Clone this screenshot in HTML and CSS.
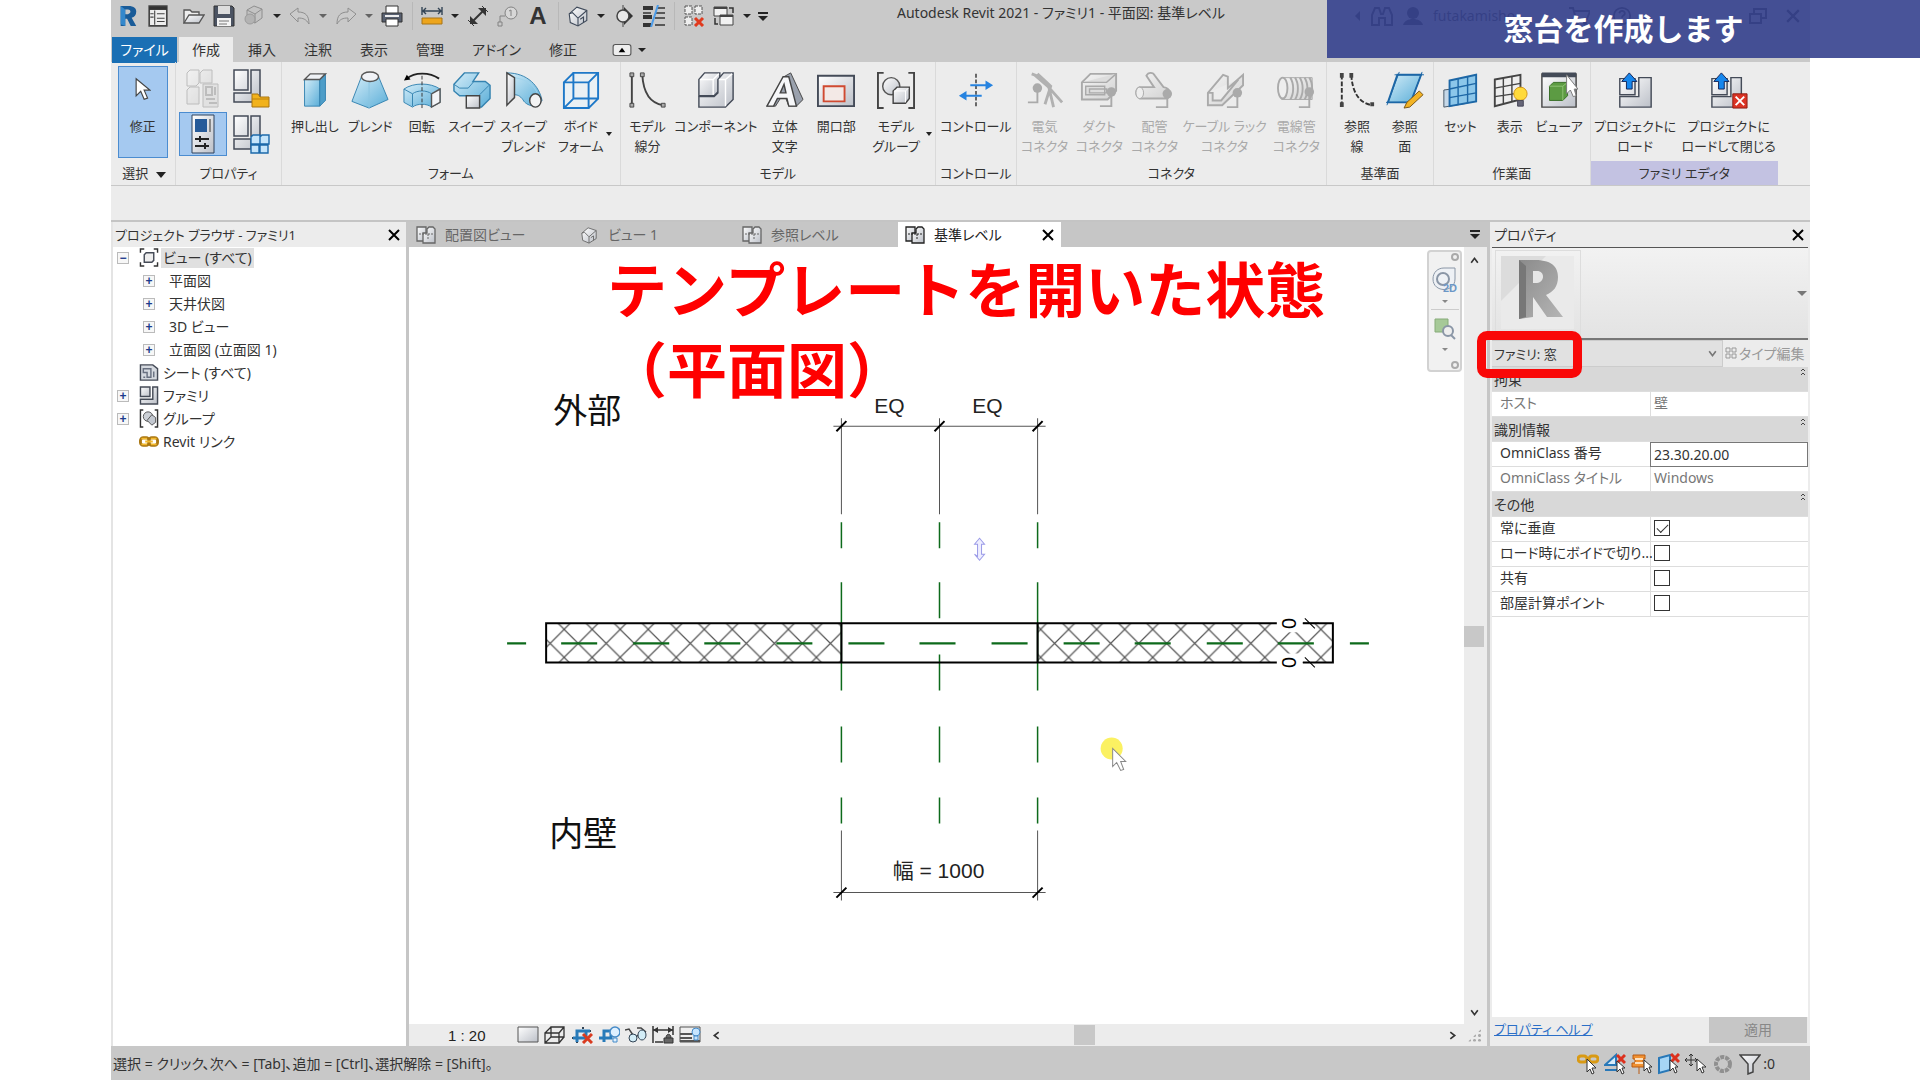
FILE: index.html
```html
<!DOCTYPE html>
<html lang="ja">
<head>
    <meta charset="UTF-8">
    <meta name="viewport" content="width=device-width, initial-scale=1.0">
    <title>Autodesk Revit 2021 - ファミリ1</title>
    <link rel="stylesheet" href="styles.css">
</head>
<body>
    <svg class="defs" aria-hidden="true">
        <defs>
            <linearGradient id="blue" x1="0" y1="0" x2="1" y2="1"><stop offset="0" stop-color="#d3ecf8"/><stop offset="1" stop-color="#5aaed8"/></linearGradient>
            <linearGradient id="gray" x1="0" y1="0" x2="1" y2="1"><stop offset="0" stop-color="#fff"/><stop offset="1" stop-color="#bcc0c8"/></linearGradient>
            <linearGradient id="pale" x1="0" y1="0" x2="1" y2="1"><stop offset="0" stop-color="#f4f4f4"/><stop offset="1" stop-color="#d2d2d2"/></linearGradient>
            <linearGradient id="rlogo" x1="0" y1="0" x2="1" y2="1"><stop offset="0" stop-color="#8b8b8b"/><stop offset="1" stop-color="#b5b5b5"/></linearGradient>
            <pattern id="hatch" x="564" y="629" width="28" height="28" patternUnits="userSpaceOnUse">
                <path d="M0 0L28 28M28 0L0 28" stroke="#555" stroke-width="1.2" fill="none"/>
            </pattern>
            <symbol id="view" viewBox="0 0 20 18"><path d="M1 1h9v14H1z" fill="url(#gray)" stroke="currentColor" stroke-width="1.3"/><path d="M7 7h4V3l2-2h4l2 2v14H7z" fill="url(#gray)" stroke="currentColor" stroke-width="1.3"/><path d="M3 8h14M12 8v6" stroke="currentColor" stroke-dasharray="2 1" fill="none"/></symbol>
            <symbol id="house" viewBox="0 0 20 20"><path d="M2 8l7-6 9 3v9l-8 5-7-3z" fill="url(#gray)" stroke="currentColor"/><path d="M2 8l3-1 5 5v7M18 5l-8 7M12 13l3-2v5" fill="none" stroke="currentColor"/></symbol>
            <symbol id="pointer" viewBox="0 0 14 20"><path d="M1 1v15l4-4 3 7 3-1-3-7h5z" fill="#fff" stroke="#444"/></symbol>
            <symbol id="close" viewBox="0 0 12 12"><path d="M1 1l10 10M11 1L1 11" stroke="currentColor" stroke-width="2" fill="none"/></symbol>
            <symbol id="family" viewBox="0 0 20 20"><path d="M1 1h10v10H1z" fill="url(#gray)" stroke="#454b57" stroke-width="1.5"/><path d="M14 1h5v18H1v-5h13z" fill="url(#gray)" stroke="#454b57" stroke-width="1.5"/></symbol>
        </defs>
    </svg>

    <div class="app">
        <header class="titlebar">
            <div class="quick">
                <button class="qbtn" aria-label="Revit"><svg viewBox="0 0 20 24"><path d="M2 1h8c7 0 9 3 9 6 0 4-2 6-5 7l5 9h-6l-4-8H7v8H2z" fill="#195b98"/><path d="M7 5h3c3 0 4 4 0 5H7z" fill="#c9c9c9"/><path d="M2 1l5 4v18l-5-2z" fill="#3488cc"/></svg></button>
                <button class="qbtn" aria-label="ホーム"><svg viewBox="0 0 20 20"><path d="M2 1h16v18H2z" fill="#eee" stroke="#444" stroke-width="1.5"/><path d="M2 3h16" stroke="#333" stroke-width="3"/><path d="M7 5v13M9 8h7M9 12h7M9 15h7M3 8h3M3 11h3" stroke="#444"/></svg></button>
                <span class="qgap"></span>
                <button class="qbtn" aria-label="開く"><svg viewBox="0 0 22 20"><path d="M1 17V4h6l2 2h7v4" fill="#eee" stroke="#555" stroke-width="1.3"/><path d="M1 17L6 9h15l-5 8z" fill="url(#gray)" stroke="#555" stroke-width="1.3"/></svg></button>
                <button class="qbtn" aria-label="保存"><svg viewBox="0 0 22 22"><path d="M1 1h18l2 2v18H1z" fill="#4b5362" stroke="#333"/><path d="M5 1h12v8H5z" fill="#ddd"/><path d="M4 13h14v8H4z" fill="#f3f3f3"/><path d="M6 16h10M6 19h8" stroke="#777"/></svg></button>
                <button class="qbtn dim" aria-label="同期"><svg viewBox="0 0 22 22"><path d="M4 5l7-4 8 3v9l-7 5-8-3z" fill="#c2c2c2" stroke="#777"/><path d="M4 5l8 4 7-5M12 9v9" stroke="#777" fill="none"/><circle cx="7" cy="14" r="5" fill="#aaa" stroke="#888"/></svg></button>
                <button class="caret" aria-label="同期の一覧"></button>
                <button class="qbtn dim" aria-label="元に戻す"><svg viewBox="0 0 22 20"><path d="M1 8l8-6v4c8 0 11 4 11 12-3-5-6-6-11-6v4z" fill="#ccc" stroke="#777"/></svg></button>
                <button class="caret faint" aria-label="履歴"></button>
                <button class="qbtn dim" aria-label="やり直し"><svg viewBox="0 0 22 20"><path d="M21 8l-8-6v4C5 6 2 10 2 18c3-5 6-6 11-6v4z" fill="#ccc" stroke="#777"/></svg></button>
                <button class="caret faint" aria-label="やり直し履歴"></button>
                <button class="qbtn" aria-label="印刷"><svg viewBox="0 0 22 22"><path d="M5 8V1h12v7" fill="#fff" stroke="#333"/><path d="M1 8h20v9H1z" fill="#586070" stroke="#333"/><path d="M5 14h12v7H5z" fill="#fff" stroke="#333"/><path d="M4 11h14" stroke="#eee" stroke-width="2"/></svg></button>
                <span class="qsep"></span>
                <button class="qbtn" aria-label="計測"><svg viewBox="0 0 22 20"><path d="M2 5h18M5 2L2 5l3 3M17 2l3 3-3 3M1 1v8M21 1v8" stroke="#345" fill="none" stroke-width="1.4"/><path d="M1 12h20v6H1z" fill="#eda51c" stroke="#a87516"/></svg></button>
                <button class="caret" aria-label="計測の一覧"></button>
                <button class="qbtn" aria-label="寸法"><svg viewBox="0 0 22 22"><path d="M5 17L17 5" stroke="#333" stroke-width="2"/><path d="M3 19v-8l8 8zM19 3v8l-8-8z" fill="#333"/><path d="M1 15l6 6M15 1l6 6" stroke="#333" fill="none"/></svg></button>
                <button class="qbtn dim" aria-label="タグ"><svg viewBox="0 0 22 22"><circle cx="14" cy="8" r="6" fill="#ddd" stroke="#666"/><path d="M12 6l2-1v6M3 17v-6h5M1 17h4v4H1z" stroke="#666" fill="none"/></svg></button>
                <button class="qbtn letter" aria-label="文字">A</button>
                <span class="qsep"></span>
                <button class="qbtn slate" aria-label="3D ビュー"><svg><use href="#house"/></svg></button>
                <button class="caret" aria-label="3D ビューの一覧"></button>
                <button class="qbtn" aria-label="断面"><svg viewBox="0 0 22 22"><path d="M11 2l9 9-9 9z" fill="#333"/><circle cx="10" cy="11" r="6" fill="#e8e8e8" stroke="#444" stroke-width="1.5"/><path d="M10 0v5M10 17v5" stroke="#444"/></svg></button>
                <button class="qbtn" aria-label="細線"><svg viewBox="0 0 22 22"><path d="M0 3h10M0 12h9M0 20h8" stroke="#333" stroke-width="4"/><path d="M0 8h8M14 3h8M13 8h9M12 13h10M12 20h10" stroke="#333" stroke-width="1.4"/><path d="M15 0L8 22" stroke="#4b9be8" stroke-width="2"/></svg></button>
                <span class="qsep"></span>
                <button class="qbtn" aria-label="非表示を閉じる"><svg viewBox="0 0 22 22"><path d="M2 1h7v8H2zM12 1h7v8h-7zM2 12h7v8H2z" fill="#eee" stroke="#555" stroke-dasharray="3 1"/><path d="M12 13l8 8M20 13l-8 8" stroke="#e03a1e" stroke-width="3"/></svg></button>
                <button class="qbtn" aria-label="ウィンドウ切替"><svg viewBox="0 0 22 22"><path d="M1 2h13v9H1zM7 10h13v10H7z" fill="#f2f2f2" stroke="#444"/><path d="M1 3h13M7 11h13" stroke="#444" stroke-width="2"/><path d="M16 3h4v5M5 19H2v-6" fill="none" stroke="#333" stroke-width="1.5"/></svg></button>
                <button class="caret" aria-label="ウィンドウの一覧"></button>
                <button class="caret bar" aria-label="カスタマイズ"></button>
            </div>
            <h1 class="title">Autodesk Revit 2021 - ファミリ1 - 平面図: 基準レベル</h1>
            <div class="account">
                <svg class="small" viewBox="0 0 10 14"><path d="M8 2L3 7l5 5z"/></svg>
                <svg viewBox="0 0 22 20"><path d="M1 19V9l3-7h4l2 6h2l2-6h4l3 7v10h-7v-7H8v7z" fill="none" stroke="currentColor" stroke-width="2"/></svg>
                <svg viewBox="0 0 22 20"><circle cx="11" cy="7" r="6"/><path d="M1 19c2-8 18-8 20 0z"/></svg>
                <span class="user">futakamisho</span>
                <svg viewBox="0 0 22 20"><path d="M1 2h4l3 11h11l3-8H6" fill="none" stroke="currentColor" stroke-width="2"/><circle cx="9" cy="17" r="2"/><circle cx="17" cy="17" r="2"/></svg>
                <svg class="help" viewBox="0 0 22 22"><circle cx="11" cy="11" r="9" fill="none" stroke="currentColor" stroke-width="2"/><path d="M8 8c1-4 7-3 6 1-1 2-3 1-3 4M11 15v2" fill="none" stroke="currentColor" stroke-width="2"/></svg>
                <svg class="restore" viewBox="0 0 18 18"><path d="M1 7h11v9H1zM5 7V2h12v9h-5" fill="none" stroke="currentColor" stroke-width="2"/></svg>
                <svg class="exit"><use href="#close"/></svg>
            </div>
        </header>

        <nav class="tabs">
            <a href="#" class="tab file">ファイル</a>
            <a href="#" class="tab on">作成</a>
            <a href="#" class="tab">挿入</a>
            <a href="#" class="tab">注釈</a>
            <a href="#" class="tab">表示</a>
            <a href="#" class="tab">管理</a>
            <a href="#" class="tab">アドイン</a>
            <a href="#" class="tab">修正</a>
            <button class="minimize" aria-label="リボンを最小化"><svg viewBox="0 0 18 12"><rect x="1" y="1" width="16" height="10" rx="2" fill="#eee" stroke="#555"/><path d="M6 8l3-4 3 4z"/></svg></button>
            <button class="caret" aria-label="リボン表示"></button>
        </nav>

        <div class="ribbon">
            <section class="panel p-select">
                <div class="tools">
                    <button class="tool active"><svg class="cur"><use href="#pointer"/></svg>修正</button>
                </div>
                <h2>選択 <i class="tri"></i></h2>
            </section>
            <section class="panel p-prop">
                <div class="tools grid2">
                    <button class="mini dim" aria-label="ファミリ タイプ"><svg viewBox="0 0 38 40"><path d="M3 5l3-3h9v13l-3 3H3zM16 5l3-3h9v13H16zM3 22l3-3h9v17H3z" fill="url(#pale)" stroke="#aaa"/><path d="M19 16h15v23H19z" fill="#ddd" stroke="#aaa"/><path d="M22 19h6v8h-6zM31 19v8M22 31h9M25 35h8" stroke="#aaa" fill="none" stroke-width="2"/></svg></button>
                    <button class="mini" aria-label="カテゴリ"><svg viewBox="0 0 38 40"><path d="M2 2h14v20H2zM19 2h9v32H2v-9h17z" fill="url(#gray)" stroke="#444b58" stroke-width="1.5"/><path d="M20 26h6l2 3h9v10H20z" fill="#f2b21b" stroke="#a97410"/><path d="M20 31h17" stroke="#bb8212"/></svg></button>
                    <button class="mini active" aria-label="プロパティ"><svg viewBox="0 0 38 40"><path d="M8 1h22v38H8z" fill="url(#gray)" stroke="#2f435d"/><path d="M11 5h12v13H11z" fill="#275b99"/><path d="M26 5v13" stroke="#888" stroke-width="2"/><path d="M11 25h14M11 32h14M16 22v6M21 29v6" stroke="#222" stroke-width="2"/></svg></button>
                    <button class="mini" aria-label="タイプ一覧"><svg viewBox="0 0 38 40"><path d="M2 2h14v20H2zM19 2h9v20h-9zM2 25h17v10H2z" fill="url(#gray)" stroke="#444b58" stroke-width="1.5"/><path d="M19 23l2-2h7v9h-9zM28 23l2-2h7v9h-9zM19 31h8v8h-8zM28 31h8v8h-8z" fill="#c5e5fb" stroke="#1c69aa" stroke-width="1.4"/></svg></button>
                </div>
                <h2>プロパティ</h2>
            </section>
            <section class="panel p-form">
                <div class="tools">
                    <button class="tool"><svg viewBox="0 0 40 40"><path d="M9 9h16v28H9z" fill="url(#blue)" stroke="#3583b0"/><path d="M25 9l6-6v28l-6 6z" fill="#4d9dc8" stroke="#3583b0"/><path d="M9 9l6-6h16l-6 6z" fill="#eef1f5" stroke="#555" stroke-width="1.5"/></svg>押し出し</button>
                    <button class="tool"><svg viewBox="0 0 40 40"><path d="M11 6L1 32l18 7 20-9L29 6z" fill="url(#blue)" stroke="#3583b0"/><path d="M19 11v28" stroke="#8ac5e2"/><ellipse cx="20" cy="6" rx="9" ry="5" fill="#f0f2f6" stroke="#555" stroke-width="1.5"/></svg>ブレンド</button>
                    <button class="tool"><svg viewBox="0 0 40 40"><path d="M1 19c10-7 28-7 38 0v14l-9 5c-5-4-15-4-20 0l-9-5z" fill="url(#blue)" stroke="#3583b0"/><path d="M30 24l9-5v14l-9 5z" fill="#f2f4f7" stroke="#555" stroke-width="1.5"/><path d="M1 19l9 5v13M10 24c5-4 15-4 20 0" fill="none" stroke="#3583b0"/><path d="M4 8c8-7 24-7 34 0" fill="none" stroke="#222" stroke-width="2"/><path d="M1 10l3-6 4 5z"/><path d="M20 5v35" stroke="#333" stroke-dasharray="4 2"/></svg>回転</button>
                    <button class="tool"><svg viewBox="0 0 40 40"><path d="M12 2h15l-6 9h13l5 4v14l-9 9h-3V26H7l-6-5v-7z" fill="url(#blue)" stroke="#3583b0" stroke-width="1.5"/><path d="M1 14l6 4h9M28 25l10-10M16 18l6-7" fill="none" stroke="#3583b0"/><path d="M14 26h14v13H14z" fill="url(#gray)" stroke="#444" stroke-width="1.5"/></svg>スイープ</button>
                    <button class="tool"><svg viewBox="0 0 40 40"><path d="M2 2c22 0 34 14 37 29l-6 6c-8 0-11-3-13-5-3-5-6-7-10-7z" fill="url(#blue)" stroke="#3583b0"/><path d="M10 7c14 2 22 9 25 19" fill="none" stroke="#9fd3ec"/><path d="M2 2l8 5v21l-8 8z" fill="url(#gray)" stroke="#444" stroke-width="1.5"/><ellipse cx="32" cy="31" rx="6" ry="7" fill="#f3f3f3" stroke="#444" stroke-width="1.5"/></svg>スイープ<br>ブレンド</button>
                    <button class="tool more"><svg viewBox="0 0 40 40"><path d="M2 12h26v27H2zM12 2h26v27H12zM2 12L12 2M28 12L38 2M2 39l10-10M28 39l10-10" fill="#e5f3fc" fill-opacity=".5" stroke="#1d78c8" stroke-width="2"/></svg>ボイド<br>フォーム</button>
                </div>
                <h2>フォーム</h2>
            </section>
            <section class="panel p-model">
                <div class="tools">
                    <button class="tool"><svg viewBox="0 0 40 40"><path d="M3 4v32M14 4c1 18 8 30 22 32" fill="none" stroke="#444" stroke-width="2"/><path d="M1 2h4v4H1zM1 34h4v4H1zM12 2h4v4h-4zM34 34h4v4h-4z" fill="#aaa" stroke="#444"/></svg>モデル<br>線分</button>
                    <button class="tool"><svg viewBox="0 0 40 40"><path d="M2 9l6-7h16v18l-6 6H2z" fill="url(#gray)" stroke="#444b58" stroke-width="1.5"/><path d="M22 9l6-7h10v28l-8 8H2V27h16l4-4z" fill="url(#gray)" stroke="#444b58" stroke-width="1.5"/><path d="M3 9h14v16M17 9l6-6M23 9h7v28M30 9l7-6" fill="none" stroke="#fff" stroke-width="1.5"/></svg>コンポーネント</button>
                    <button class="tool"><svg viewBox="0 0 40 40"><path d="M1 37L19 6l7-4 13 28-7 7h-8l-3-8h-6l-5 8z" fill="#9aa1ad" stroke="#444"/><path d="M1 37L18 6h6l8 31h-8l-2-8H12l-4 8zM15 23h6l-2-9z" fill="#f6f7f9" stroke="#444" stroke-width="1.5" fill-rule="evenodd"/></svg>立体<br>文字</button>
                    <button class="tool"><svg viewBox="0 0 40 40"><path d="M1 5h38v32H1z" fill="url(#gray)" stroke="#444b58" stroke-width="2"/><path d="M7 16h22v16H7z" fill="#f3e9e6" stroke="#d04a31" stroke-width="2"/></svg>開口部</button>
                    <button class="tool more"><svg viewBox="0 0 40 40"><path d="M7 2H1v37h6M33 2h6v37h-6" fill="none" stroke="#444" stroke-width="2"/><circle cx="15" cy="16" r="9" fill="url(#gray)" stroke="#555" stroke-width="1.5"/><path d="M17 21l4-4h13v12l-4 5H17z" fill="url(#gray)" stroke="#444" stroke-width="1.5"/><path d="M18 21h12v12M30 21l3-3" fill="none" stroke="#fff"/></svg>モデル<br>グループ</button>
                </div>
                <h2>モデル</h2>
            </section>
            <section class="panel p-control">
                <div class="tools">
                    <button class="tool"><svg viewBox="0 0 40 40"><path d="M20 3v35" stroke="#333" stroke-width="1.5" stroke-dasharray="4 2"/><path d="M14 15h17M9 26h17" stroke="#2683e0" stroke-width="2"/><path d="M30 10l8 5-8 5zM10 21l-8 5 8 5z" fill="#2683e0"/></svg>コントロール</button>
                </div>
                <h2>コントロール</h2>
            </section>
            <section class="panel p-connect">
                <div class="tools">
                    <button class="tool" disabled><svg viewBox="0 0 40 40"><path d="M6 3l8 3 24 27M9 4l15 13 5 21M12 3l14 13-6 19" fill="none" stroke="#b1b1b1" stroke-width="3"/><circle cx="12" cy="18" r="5" fill="#aaa"/><path d="M12 22v11H2" fill="none" stroke="#aaa" stroke-width="2"/></svg>電気<br>コネクタ</button>
                    <button class="tool" disabled><svg viewBox="0 0 40 40"><path d="M2 12l9-9h27v18l-9 9H2z" fill="url(#pale)" stroke="#aaa" stroke-width="2"/><path d="M2 12h26l10-9M6 16h20v9H6zM10 19h18v4H10z" fill="#ddd" stroke="#aaa" stroke-width="1.5"/><circle cx="33" cy="22" r="5" fill="#aaa"/><path d="M33 26v11H21" fill="none" stroke="#aaa" stroke-width="2"/></svg>ダクト<br>コネクタ</button>
                    <button class="tool" disabled><svg viewBox="0 0 40 40"><path d="M12 5c2-4 7-4 9 0l9 12c8 1 9 11 3 12H5c-5-3-5-10 0-12h15z" fill="url(#pale)" stroke="#aaa" stroke-width="2"/><ellipse cx="5" cy="23" rx="4" ry="6" fill="#eee" stroke="#aaa"/><circle cx="34" cy="24" r="5" fill="#aaa"/><path d="M34 28v10H22" fill="none" stroke="#aaa" stroke-width="2"/></svg>配管<br>コネクタ</button>
                    <button class="tool" disabled><svg viewBox="0 0 40 40"><path d="M2 23L18 4l5 2v12L39 4v11L17 36H2zM2 23h5v8h9L34 9" fill="url(#pale)" stroke="#aaa" stroke-width="2"/><circle cx="33" cy="23" r="5" fill="#aaa"/><path d="M33 27v11H22" fill="none" stroke="#aaa" stroke-width="2"/></svg>ケーブル ラック<br>コネクタ</button>
                    <button class="tool" disabled><svg viewBox="0 0 40 40"><path d="M5 7h32v23H5z" fill="url(#pale)" stroke="#aaa"/><ellipse cx="6" cy="18" rx="5" ry="11" fill="#eee" stroke="#aaa" stroke-width="2"/><path d="M14 7c4 6 4 17 0 23M19 7c4 6 4 17 0 23M24 7c4 6 4 17 0 23M29 7c4 6 4 17 0 23M34 7c4 6 4 17 0 23" fill="none" stroke="#aaa" stroke-width="2"/><circle cx="34" cy="22" r="5" fill="#aaa"/><path d="M34 26v12H23" fill="none" stroke="#aaa" stroke-width="2"/></svg>電線管<br>コネクタ</button>
                </div>
                <h2>コネクタ</h2>
            </section>
            <section class="panel p-datum">
                <div class="tools">
                    <button class="tool"><svg viewBox="0 0 40 40"><path d="M4 4v32M14 4c1 18 8 30 22 32" fill="none" stroke="#333" stroke-width="2" stroke-dasharray="5 2"/><path d="M2 2h4v5H2zM2 33h4v5H2zM12 2h4v5h-4zM34 33h4v4h-4z" fill="#444"/></svg>参照<br>線</button>
                    <button class="tool"><svg viewBox="0 0 40 40"><path d="M12 4h25L26 33H2z" fill="url(#blue)" stroke="#1d67a6" stroke-width="2"/><path d="M9 4h31M0 33h30M38 1L25 36M14 1L1 36" stroke="#1d67a6"/><path d="M35 21l4 4-14 13-6 1 3-6z" fill="#f2b324" stroke="#765315"/></svg>参照<br>面</button>
                </div>
                <h2>基準面</h2>
            </section>
            <section class="panel p-work">
                <div class="tools">
                    <button class="tool"><svg viewBox="0 0 40 40"><path d="M3 20l24-3v17L3 38z" fill="#c6d8e8" stroke="#456"/><path d="M9 10l28-6v28L9 37z" fill="#8cc7ea" stroke="#1d67a6" stroke-width="2"/><path d="M18 8v27M28 6v28M9 19l28-6M9 28l28-5" stroke="#1d67a6" stroke-width="1.5"/></svg>セット</button>
                    <button class="tool"><svg viewBox="0 0 40 40"><path d="M4 9l27-5v26L4 37z" fill="#eee" stroke="#444" stroke-width="2"/><path d="M13 7v27M22 6v26M4 18l27-5M4 27l27-4" stroke="#444" stroke-width="1.5"/><circle cx="31" cy="24" r="7" fill="#ffda3b" stroke="#d39513"/><path d="M28 31h6v6h-6z" fill="#667" stroke="#445"/></svg>表示</button>
                    <button class="tool"><svg viewBox="0 0 40 40"><path d="M2 3h36v35H2z" fill="url(#gray)" stroke="#444" stroke-width="1.5"/><path d="M2 4h36" stroke="#444b58" stroke-width="5"/><path d="M10 16l4-4h15v14l-5 5H10z" fill="#5c9b43" stroke="#366b25"/><path d="M10 16h14v15M24 16l5-4" fill="none" stroke="#91c477"/><path d="M28 4v20l4-4 3 7 3-1-2-7h4z" fill="#fff" stroke="#777"/></svg>ビューア</button>
                </div>
                <h2>作業面</h2>
            </section>
            <section class="panel p-editor">
                <div class="tools">
                    <button class="tool"><svg viewBox="0 0 40 40"><path d="M4 8h16v17H4zM24 7h13v31H4V27h20z" fill="url(#gray)" stroke="#444b58" stroke-width="1.5"/><path d="M14 2l8 9h-5v8h-6v-8H6z" fill="#1787ed" stroke="#125"/></svg>プロジェクトに<br>ロード</button>
                    <button class="tool"><svg viewBox="0 0 40 40"><path d="M2 8h16v17H2zM22 7h11v31H2V27h20z" fill="url(#gray)" stroke="#444b58" stroke-width="1.5"/><path d="M12 2l8 9h-5v8H9v-8H4z" fill="#1787ed" stroke="#125"/><path d="M24 24h15v15H24z" fill="#db3324" stroke="#8d1b12"/><path d="M27 27l9 9M36 27l-9 9" stroke="#fff" stroke-width="2"/></svg>プロジェクトに<br>ロードして閉じる</button>
                </div>
                <h2>ファミリ エディタ</h2>
            </section>
        </div>
        <div class="optionbar"></div>

        <main class="work">
            <aside class="browser">
                <div class="panehead">プロジェクト ブラウザ - ファミリ1<button aria-label="ブラウザを閉じる"><svg><use href="#close"/></svg></button></div>
                <ul class="tree">
                    <li><button>−</button><svg viewBox="0 0 20 20"><path d="M5 1H1v4M15 1h4v4M5 19H1v-4M15 19h4v-4" fill="none" stroke="#333" stroke-width="1.5"/><path d="M5 7l2-2h8v8l-2 2H5z" fill="#eee" stroke="#454b57" stroke-width="1.5"/></svg><span class="sel">ビュー (すべて)</span></li>
                    <li class="child"><button>+</button><span>平面図</span></li>
                    <li class="child"><button>+</button><span>天井伏図</span></li>
                    <li class="child"><button>+</button><span>3D ビュー</span></li>
                    <li class="child"><button>+</button><span>立面図 (立面図 1)</span></li>
                    <li><i></i><svg viewBox="0 0 20 20"><path d="M1 2h13l5 4v12H1z" fill="#d5d9df" stroke="#454b57" stroke-width="1.5"/><path d="M4 6h8v9H8v-5H4zM15 9v6M4 15h2" fill="none" stroke="#687080" stroke-width="1.5"/></svg><span>シート (すべて)</span></li>
                    <li><button>+</button><svg><use href="#family"/></svg><span>ファミリ</span></li>
                    <li><button>+</button><svg viewBox="0 0 20 20"><path d="M4 1H1v18h3M16 1h3v18h-3" fill="none" stroke="#333" stroke-width="1.5"/><circle cx="9" cy="8" r="5" fill="#ccd0d6" stroke="#555"/><path d="M8 12l5-6 4 3v5l-4 3z" fill="#c3c8d0" stroke="#555"/></svg><span>グループ</span></li>
                    <li><i></i><svg viewBox="0 0 20 20"><rect x="1" y="6" width="9" height="8" rx="3" fill="none" stroke="#a97611" stroke-width="3"/><rect x="10" y="6" width="9" height="8" rx="3" fill="none" stroke="#a97611" stroke-width="3"/><path d="M2 7h6M12 7h6M2 13h6M12 13h6M6 10h8" stroke="#f2b82b" stroke-width="2"/></svg><span>Revit リンク</span></li>
                </ul>
            </aside>

            <section class="center">
                <div class="viewtabs">
                    <a href="#"><svg><use href="#view"/></svg>配置図ビュー</a>
                    <a href="#"><svg><use href="#house"/></svg>ビュー 1</a>
                    <a href="#"><svg><use href="#view"/></svg>参照レベル</a>
                    <a href="#" class="on"><svg><use href="#view"/></svg>基準レベル<svg class="x"><use href="#close"/></svg></a>
                    <button class="caret bar" aria-label="タブ一覧"></button>
                </div>
                <div class="viewport">
                    <div class="canvas">
                        <svg class="drawing" viewBox="409 247 1054 776">
                            <path d="M841 418v96M939 418v96M1037 418v96M833 426h212M841 830v70M1037 830v70M833 892h212" stroke="#555" fill="none"/>
                            <path d="M836 431l10-10M934 431l10-10M1032 431l10-10M836 897l10-10M1032 897l10-10" stroke="#000" stroke-width="2"/>
                            <path d="M546 623h295v39H546zM1037 623h295v39h-295z" fill="url(#hatch)"/>
                            <g stroke="#0d6a1b" stroke-width="1.5" fill="none">
                                <path d="M841 522v26M841 582v108M841 726v36M841 797v26M939 522v26M939 582v36M939 654v36M939 726v36M939 797v26M1037 522v26M1037 582v108M1037 726v36M1037 797v26"/>
                                <path stroke-width="2" d="M507 643h19M561 643h36M633 643h36M704 643h36M776 643h36M848 643h36M919 643h36M991 643h36M1063 643h36M1134 643h36M1206 643h36M1277 643h36M1349 643h19"/>
                            </g>
                            <path d="M546 623h786v39H546zM841 623v39M1037 623v39" fill="none" stroke="#000" stroke-width="2"/>
                            <path d="M1276 614h26v18h-26zM1276 653h26v18h-26z" fill="#fff"/>
                            <path d="M1302 623h16M1302 662h16M1304 618l10 10M1304 657l10 10" stroke="#000"/>
                            <text class="zero" transform="translate(1295 623) rotate(-90)">0</text>
                            <text class="zero" transform="translate(1295 662) rotate(-90)">0</text>
                            <path d="M977 556v-12h-3l5-6 5 6h-3v10h3l-5 6-5-6z" fill="#eef" stroke="#9b9be8"/>
                            <text class="dim-text" x="889" y="413">EQ</text>
                            <text class="dim-text" x="987" y="413">EQ</text>
                            <text class="dim-text" x="938" y="877">幅 = 1000</text>
                            <text class="room" x="587" y="423">外部</text>
                            <text class="room" x="583" y="845">内壁</text>
                            <circle cx="1111" cy="748" r="11" fill="#fbf162"/>
                            <path d="M1112 748v18l4-4 4 8 3-1-3-8h5z" fill="#fff" stroke="#888"/>
                        </svg>
                        <p class="caption">テンプレートを開いた状態<br>（平面図）</p>
                        <div class="navbar">
                            <span class="dot"></span>
                            <button aria-label="ホイール"><svg viewBox="0 0 28 28"><path d="M13 2h11v11c0 14-22 14-22 0C2 6 7 2 13 2z" fill="#eef1f5" stroke="#8a96a6"/><circle cx="12" cy="13" r="6" fill="none" stroke="#8a96a6" stroke-width="2"/><text x="12" y="26">2D</text></svg></button>
                            <i class="tri"></i>
                            <button class="second" aria-label="ズーム"><svg viewBox="0 0 28 28"><path d="M4 5h13v13H4z" fill="#a6c998" stroke="#86ab79"/><circle cx="17" cy="17" r="5" fill="#eee" stroke="#8a96a6" stroke-width="2"/><path d="M20 21l4 4" stroke="#8a96a6" stroke-width="2"/></svg></button>
                            <i class="tri"></i>
                            <span class="dot low"></span>
                        </div>
                    </div>
                    <div class="vscroll"><button aria-label="上へ"><svg viewBox="0 0 10 10"><path d="M2 7l3-4 3 4"/></svg></button><i></i><button aria-label="下へ"><svg viewBox="0 0 10 10"><path d="M2 3l3 4 3-4"/></svg></button></div>
                </div>
                <div class="viewbar">
                    <span class="scale">1 : 20</span>
                    <button aria-label="詳細レベル"><svg viewBox="0 0 22 18"><path d="M1 1h20v15H1z" fill="url(#gray)" stroke="#555"/></svg></button>
                    <button aria-label="表示スタイル"><svg viewBox="0 0 22 18"><path d="M1 7h14v10H1zM7 1h13v10H7zM1 7l6-6M15 7l5-6M1 17l6-6M15 17l5-6" fill="none" stroke="#333" stroke-width="1.3"/></svg></button>
                    <button aria-label="トリミング"><svg viewBox="0 0 22 18"><path d="M1 12h3M12 1v2M6 17V5h14" fill="none" stroke="#345" stroke-width="2"/><path d="M6 16V5h13M2 12h13V5" fill="none" stroke="#287bb9" stroke-width="3"/><path d="M12 8l9 9M21 8l-9 9" stroke="#d93b20" stroke-width="3"/></svg></button>
                    <button aria-label="トリミング領域"><svg viewBox="0 0 22 18"><path d="M6 16V5h9M1 12h12V7" fill="none" stroke="#287bb9" stroke-width="3"/><circle cx="17" cy="6" r="5" fill="#def0ff" stroke="#458ac7" stroke-width="1.5"/><path d="M15 12h4v4h-4z" fill="#def0ff" stroke="#458ac7"/></svg></button>
                    <button aria-label="一時的に非表示"><svg viewBox="0 0 22 18"><path d="M0 4l4-1 6 9M10 12l3-3M12 2h4l5 4" fill="none" stroke="#444" stroke-width="1.5"/><ellipse cx="8" cy="12" rx="4" ry="4" fill="#d3edf7" stroke="#345"/><ellipse cx="17" cy="9" rx="4" ry="5" fill="#d3edf7" stroke="#345"/></svg></button>
                    <button aria-label="拘束"><svg viewBox="0 0 22 18"><path d="M1 0v17M21 0v9M1 4h20M3 16h8" stroke="#333" stroke-width="1.5"/><path d="M1 4l5-3v6zM21 4l-5-3v6z" fill="#333"/><path d="M12 12h9v5h-9zM14 12c0-5 5-5 5 0" fill="#666" stroke="#333"/></svg></button>
                    <button aria-label="プロパティ表示"><svg viewBox="0 0 22 18"><path d="M1 1h20v15H1z" fill="#eee" stroke="#555"/><path d="M1 8h12M1 12h12M1 15h20" stroke="#555" stroke-width="2"/><circle cx="17" cy="6" r="4" fill="#c6e5ff" stroke="#458ac7"/><path d="M15 10h4v4h-4z" fill="#c6e5ff" stroke="#458ac7"/></svg></button>
                    <button class="back" aria-label="左へ"><svg viewBox="0 0 10 10"><path d="M7 2L3 5l4 3"/></svg></button>
                    <div class="hscroll"><i></i></div>
                    <button class="back" aria-label="右へ"><svg viewBox="0 0 10 10"><path d="M3 2l4 3-4 3"/></svg></button>
                    <span class="grip"></span>
                </div>
            </section>

            <aside class="props">
                <div class="panehead">プロパティ<button aria-label="プロパティを閉じる"><svg><use href="#close"/></svg></button></div>
                <div class="preview">
                    <svg viewBox="0 0 84 84"><path d="M5 5h73v73H5z" fill="#eaeaea"/><path d="M5 5h45L5 50z" fill="#dcdcdc"/><path d="M23 9h16c19 0 23 9 23 17 0 10-5 15-12 18l17 22H51L37 46v20l-14 2z" fill="url(#rlogo)"/><path d="M37 20h4c8 0 8 11 0 12h-4z" fill="#e6e6e6"/><path d="M23 9l7 6v51l-7 2z" fill="#777"/></svg>
                    <i class="tri"></i>
                </div>
                <div class="typerow">
                    <select aria-label="ファミリ"><option>ファミリ: 窓</option></select>
                    <svg class="down" viewBox="0 0 10 10"><path d="M2 3l3 4 3-4"/></svg>
                    <button disabled><svg viewBox="0 0 12 12"><path d="M1 1h4v4H1zM7 1h4v4H7zM1 7h4v4H1zM7 7h4v4H7z" fill="none" stroke="#999"/></svg>タイプ編集</button>
                    <span class="redbox"></span>
                </div>
                <table>
                    <tr class="group"><th colspan="2">拘束<svg viewBox="0 0 6 8"><path d="M1 3l2-2 2 2M1 7l2-2 2 2"/></svg></th></tr>
                    <tr class="off"><th>ホスト</th><td>壁</td></tr>
                    <tr class="group"><th colspan="2">識別情報<svg viewBox="0 0 6 8"><path d="M1 3l2-2 2 2M1 7l2-2 2 2"/></svg></th></tr>
                    <tr><th><label for="omni">OmniClass 番号</label></th><td class="edit"><input type="text" id="omni" value="23.30.20.00"></td></tr>
                    <tr class="off"><th>OmniClass タイトル</th><td>Windows</td></tr>
                    <tr class="group"><th colspan="2">その他<svg viewBox="0 0 6 8"><path d="M1 3l2-2 2 2M1 7l2-2 2 2"/></svg></th></tr>
                    <tr><th><label for="vert">常に垂直</label></th><td><input type="checkbox" id="vert" checked></td></tr>
                    <tr><th><label for="void">ロード時にボイドで切り...</label></th><td><input type="checkbox" id="void"></td></tr>
                    <tr><th><label for="share">共有</label></th><td><input type="checkbox" id="share"></td></tr>
                    <tr><th><label for="calc">部屋計算ポイント</label></th><td><input type="checkbox" id="calc"></td></tr>
                </table>
                <div class="apply"><a href="#">プロパティ ヘルプ</a><button disabled>適用</button></div>
            </aside>
        </main>

        <footer class="status">
            <span>選択 = クリック、次へ = [Tab]、追加 = [Ctrl]、選択解除 = [Shift]。</span>
            <div class="filters">
                <button aria-label="リンクを選択"><svg viewBox="0 0 22 22"><rect x="1" y="3" width="9" height="6" rx="3" fill="none" stroke="#d99a14" stroke-width="3"/><rect x="12" y="3" width="9" height="6" rx="3" fill="none" stroke="#d99a14" stroke-width="3"/><path d="M10 6v13l3-3 2 5 2-1-2-5h4z" fill="#fff" stroke="#333"/></svg></button>
                <button aria-label="アンダーレイを選択"><svg viewBox="0 0 22 22"><path d="M1 12L12 2v10zM1 17h14" fill="#d8ecfa" stroke="#2878b8" stroke-width="2"/><path d="M13 2l8 8M21 2l-8 8" stroke="#dc301d" stroke-width="3"/><path d="M13 8v11l3-3 2 5 2-1-2-5h3z" fill="#fff" stroke="#333"/></svg></button>
                <button aria-label="ピンを選択"><svg viewBox="0 0 22 22"><path d="M2 2h12v4h-2v4h3v4H1v-4h3V6H2zM8 14v7" fill="#f19131" stroke="#b95b12"/><path d="M4 6h8M4 10h8" stroke="#ffe1bd" stroke-width="2"/><path d="M13 7v11l3-3 2 5 2-1-2-5h3z" fill="#fff" stroke="#333"/></svg></button>
                <button aria-label="面で選択"><svg viewBox="0 0 22 22"><path d="M1 5l11-3v15L1 20z" fill="#a6d5f5" stroke="#2878b8" stroke-width="2"/><path d="M13 1l8 8M21 1l-8 8" stroke="#dc301d" stroke-width="3"/><path d="M12 7v11l3-3 2 5 2-1-2-5h3z" fill="#fff" stroke="#333"/></svg></button>
                <button aria-label="ドラッグ"><svg viewBox="0 0 22 22"><path d="M6 1v12M0 7h12M4 3l2-2 2 2M4 11l2 2 2-2M2 5L0 7l2 2M10 5l2 2-2 2" fill="none" stroke="#333"/><path d="M12 6v12l3-3 2 5 2-1-2-5h4z" fill="#fff" stroke="#333"/></svg></button>
                <button aria-label="バックグラウンド"><svg viewBox="0 0 22 22"><circle cx="11" cy="11" r="7" fill="none" stroke="#909090" stroke-width="4" stroke-dasharray="4 1"/></svg></button>
                <button aria-label="フィルタ"><svg viewBox="0 0 22 22"><path d="M1 2h20l-7 9v8l-5 2V11z" fill="url(#gray)" stroke="#444" stroke-width="1.5"/></svg></button>
                <span>:0</span>
            </div>
        </footer>
    </div>
    <div class="banner">窓台を作成します</div>
</body>
</html>
```
FILE: styles.css
```css
* {
    box-sizing: border-box;
}
body {
    margin: 0;
    background: #fff;
    color: #333;
    font-family: "Noto Sans", "Noto Sans CJK JP", sans-serif;
    font-size: 14px;
    line-height: 20px;
    font-feature-settings: "palt";
}
button, input, select {
    font: inherit;
    font-feature-settings: inherit;
    color: inherit;
    margin: 0;
    padding: 0;
    border: none;
    background: none;
}
a {
    color: inherit;
    text-decoration: none;
}
h1, h2, p, ul {
    margin: 0;
    padding: 0;
    font-weight: normal;
}
.defs {
    position: absolute;
    width: 0;
    height: 0;
}
.app {
    min-height: 100vh;
    margin: 0 110px 0 111px;
    display: flex;
    flex-direction: column;
    background: #ececec;
}

/* title bar */
.titlebar {
    height: 37px;
    padding-left: 2px;
    display: flex;
    background: #c9c9c9;
}
.quick {
    display: flex;
    align-items: center;
    height: 32px;
}
.qbtn {
    width: 30px;
    height: 26px;
    display: flex;
    align-items: center;
    justify-content: center;
}
.qbtn svg {
    width: 22px;
    height: 22px;
}
.slate {
    color: #3f4a5a;
}
.dim {
    opacity: .7;
}
.letter {
    font: bold 24px "Liberation Sans", sans-serif;
}
.qgap {
    width: 6px;
}
.qsep {
    width: 10px;
    height: 28px;
    background: linear-gradient(#b8b8b8, #b8b8b8) center / 1px 100% no-repeat;
}
.caret {
    width: 16px;
    height: 16px;
    display: flex;
    flex-direction: column;
    align-items: center;
    justify-content: center;
}
.caret::after, .tri {
    content: "";
    border: 4px solid transparent;
    border-top-color: #222;
    border-bottom: none;
}
.caret.faint {
    opacity: .6;
}
.caret.bar::before {
    content: "";
    width: 10px;
    height: 2px;
    margin-bottom: 2px;
    background: #222;
}
.caret.bar::after {
    border-width: 5px 5px 0;
}
.title {
    flex: 1;
    padding-left: 126px;
    font-size: 14px;
    line-height: 25px;
    white-space: nowrap;
}
.account {
    width: 458px;
    height: 32px;
    display: flex;
    align-items: center;
    gap: 9px;
    color: #222;
    fill: #222;
}
.account svg {
    width: 22px;
    height: 20px;
}
.account .small {
    width: 10px;
}
.account .user {
    margin-right: 44px;
}
.account .help {
    margin-left: 12px;
}
.account .restore {
    width: 18px;
    margin-left: auto;
}
.account .exit {
    width: 14px;
    height: 14px;
    margin: 0 10px;
}

/* ribbon */
.tabs {
    height: 25px;
    display: flex;
    align-items: center;
    gap: 2px;
    padding-left: 1px;
    background: #c9c9c9;
}
.tab {
    padding: 0 13px;
    line-height: 26px;
}
.tab.file {
    padding: 0;
    width: 65px;
    text-align: center;
    background: #1a6fb4;
    color: #fff;
}
.tab.on {
    background: #ececec;
}
.minimize {
    width: 20px;
    height: 16px;
    margin-left: 20px;
}
.minimize svg {
    width: 20px;
    height: 16px;
}
.ribbon {
    height: 124px;
    display: flex;
    padding: 0 32px 0 2px;
    border-bottom: 1px solid #c8c8c8;
}
.panel {
    min-width: 0;
    display: flex;
    flex-direction: column;
    border-right: 1px solid #dadada;
}
.p-select { flex: 62; }
.p-prop { flex: 106; }
.p-form { flex: 339; }
.p-model { flex: 316; }
.p-control { flex: 80; }
.p-connect { flex: 311; }
.p-datum { flex: 106; }
.p-work { flex: 157; }
.p-editor { flex: 188; border: none; }
.panel h2 {
    height: 24px;
    font-size: 13px;
    line-height: 24px;
    text-align: center;
}
.panel .tri, .panel h2 .tri {
    display: inline-block;
    border-width: 6px 5px 0;
    margin-left: 4px;
}
.p-editor h2 {
    background: #c3c2e2;
}
.tools {
    flex: 1;
    display: grid;
    padding-top: 4px;
}
.p-form .tools {
    grid-template-columns: 58fr 54fr 50fr 51fr 54fr 62fr;
    padding-right: 8px;
    padding-left: 4px;
}
.p-model .tools {
    grid-template-columns: 54fr 83fr 55fr 48fr 72fr;
    padding-right: 3px;
}
.p-connect .tools {
    grid-template-columns: 56fr 54fr 57fr 84fr 60fr;
}
.p-datum .tools {
    grid-template-columns: 1fr 1fr;
    padding: 4px 4px 0 6px;
}
.p-work .tools {
    grid-template-columns: 1fr 1fr 1fr;
    padding-left: 2px;
    padding-right: 6px;
}
.p-editor .tools {
    grid-template-columns: 88fr 98fr;
}
.tool {
    position: relative;
    min-width: 0;
    display: flex;
    flex-direction: column;
    align-items: center;
    padding-top: 5px;
    font-size: 13px;
    white-space: nowrap;
}
.tool svg {
    flex: none;
    width: 38px;
    height: 38px;
    margin-bottom: 7px;
}
.tool:disabled {
    color: #a9a9a9;
}
.tool.more::after {
    content: "";
    position: absolute;
    right: 0;
    top: 66px;
    border: 3px solid transparent;
    border-top: 4px solid #222;
}
.tool.active, .mini.active {
    background: #a5c9f0;
    border: 1px solid #4b8cd0;
}
.p-select .tools {
    padding: 4px 7px 3px 5px;
}
.tool .cur {
    width: 16px;
    height: 26px;
    margin: 4px 0 14px;
}
.grid2 {
    grid-template-columns: 48px 48px;
    grid-template-rows: 44px 44px;
    gap: 2px 0;
    padding-left: 3px;
}
.mini {
    display: flex;
    align-items: center;
    justify-content: center;
}
.mini svg {
    width: 38px;
    height: 40px;
}
.optionbar {
    height: 36px;
    border-bottom: 2px solid #c4c4c4;
}

/* work area */
.work {
    flex: 1;
    display: grid;
    grid-template-columns: 295px 1fr 320px;
    gap: 3px;
    background: #c6c6c6;
}
.panehead {
    height: 25px;
    display: flex;
    align-items: center;
    justify-content: space-between;
    padding: 0 6px 0 4px;
    background: #ececec;
}
.panehead svg, .viewtabs .x {
    display: block;
    width: 12px;
    height: 12px;
    color: #000;
}
.browser {
    background: #fff;
    border-left: 2px solid #e4e4e4;
}
.browser .panehead {
    padding-left: 2px;
    font-size: 13px;
}
.tree {
    margin-top: -1px;
    list-style: none;
}
.tree li {
    display: flex;
    align-items: center;
    height: 23px;
    padding-left: 4px;
}
.tree li.child {
    padding-left: 30px;
}
.tree button {
    width: 12px;
    height: 12px;
    border: 1px solid #bbb;
    background: #f7f7f7;
    color: #1c3c8c;
    font: bold 12px/8px "Liberation Sans", sans-serif;
}
.tree i {
    width: 12px;
}
.tree svg {
    width: 20px;
    height: 19px;
    margin-left: 10px;
}
.tree span {
    margin-left: 2px;
    padding: 0 2px;
}
.tree .child span {
    margin-left: 12px;
}
.tree .sel {
    background: #e0e0e0;
}
.center {
    display: flex;
    flex-direction: column;
    min-width: 0;
    background: #ececec;
}
.viewtabs {
    display: flex;
    align-items: center;
    height: 25px;
    background: #c6c6c6;
    color: #666;
}
.viewtabs a {
    width: 163px;
    height: 25px;
    display: flex;
    align-items: center;
    gap: 9px;
    padding: 0 7px;
}
.viewtabs svg {
    width: 20px;
    height: 18px;
}
.viewtabs .on {
    background: #fff;
    color: #222;
}
.viewtabs .x {
    margin-left: auto;
}
.viewtabs .caret {
    margin: 0 4px 0 auto;
}
.viewport {
    flex: 1;
    display: flex;
    min-height: 0;
}
.canvas {
    position: relative;
    flex: 1;
    background: #fff;
}
.drawing {
    display: block;
    width: 100%;
}
.dim-text, .room {
    font-size: 21px;
    text-anchor: middle;
    fill: #222;
    font-family: "Liberation Sans", "Noto Sans CJK JP", sans-serif;
}
.room {
    font-size: 34px;
    fill: #111;
}
.zero {
    font: 20px "Liberation Sans", sans-serif;
    text-anchor: middle;
}
.caption {
    position: absolute;
    left: 198px;
    top: 0;
    color: #f00;
    font-size: 60px;
    font-weight: 700;
    line-height: 80px;
    white-space: nowrap;
    font-feature-settings: normal;
    font-family: "Noto Sans CJK JP", sans-serif;
}
.navbar {
    position: absolute;
    right: 2px;
    top: 3px;
    width: 35px;
    height: 122px;
    display: flex;
    flex-direction: column;
    align-items: center;
    background: #f1f1f1;
    border: 2px solid #d2d2d2;
    border-radius: 4px;
}
.navbar svg {
    display: block;
    width: 28px;
    height: 28px;
    margin-top: 4px;
}
.navbar text {
    font: bold 11px "Liberation Sans", sans-serif;
    fill: #6c97c6;
}
.navbar .tri {
    margin-top: 6px;
    border-top-color: #888;
    border-width: 3px 3px 0;
}
.navbar .second {
    margin-top: 6px;
    border-top: 1px solid #ccc;
}
.dot {
    align-self: flex-end;
    width: 8px;
    height: 8px;
    margin: 1px;
    border: 2px solid #aaa;
    border-radius: 50%;
}
.dot.low {
    margin-top: auto;
}
.vscroll {
    width: 23px;
    padding: 8px 3px 6px 0;
    display: flex;
    flex-direction: column;
    justify-content: space-between;
}
.vscroll i {
    height: 21px;
    background: #c8c8c8;
}
.vscroll button, .back {
    display: flex;
    justify-content: center;
    align-items: center;
}
.vscroll svg, .back svg, .down {
    width: 11px;
    height: 11px;
    fill: none;
    stroke: #333;
    stroke-width: 1.5;
}
.viewbar {
    height: 22px;
    display: flex;
    align-items: center;
    padding-left: 39px;
    color: #222;
}
.scale {
    width: 66px;
    font: 15px "Liberation Sans", sans-serif;
}
.viewbar button {
    width: 27px;
}
.viewbar button svg {
    display: block;
    width: 22px;
    height: 18px;
    margin: auto;
}
.viewbar .back svg {
    width: 11px;
    height: 11px;
}
.hscroll {
    flex: 1;
    display: flex;
    justify-content: center;
}
.hscroll i {
    width: 21px;
    height: 20px;
    background: #c8c8c8;
}
.grip {
    width: 21px;
    height: 16px;
    background: radial-gradient(#aaa 1px, transparent 2px) right bottom / 5px 5px;
    clip-path: polygon(75% 10%, 75% 90%, 10% 90%);
}

/* properties */
.props {
    display: flex;
    flex-direction: column;
    background: #fff;
    border: solid #ececec;
    border-width: 0 2px;
}
.props .panehead {
    padding: 0 4px 0 2px;
}
.preview {
    height: 93px;
    display: flex;
    align-items: center;
    justify-content: space-between;
    background: linear-gradient(#f2f2f2, #e3e3e3);
    border-top: 1px solid #555;
    border-bottom: 2px solid #777;
}
.preview svg {
    width: 86px;
    height: 86px;
    margin-left: 3px;
    border: 1px solid #ddd;
}
.preview .tri {
    border-width: 5px 5px 0;
    border-top-color: #777;
    margin-right: 1px;
}
.typerow {
    position: relative;
    z-index: 1;
    height: 27px;
    display: flex;
    align-items: center;
    background: #ececec;
}
.typerow select {
    width: 231px;
    height: 27px;
    padding-left: 2px;
    appearance: none;
    background: #e1e1e1;
    border: 1px solid #ccc;
    border-left: none;
    font-size: 13px;
}
.typerow .down {
    margin-left: -16px;
    stroke: #777;
}
.typerow button {
    flex: 1;
    margin-left: 5px;
    color: #999;
    text-align: left;
    white-space: nowrap;
}
.typerow button svg {
    width: 12px;
    height: 12px;
    margin: 0 2px;
}
.redbox {
    position: absolute;
    left: -15px;
    top: -9px;
    width: 105px;
    height: 47px;
    border: 9px solid #f90808;
    border-radius: 10px;
}
table {
    width: 100%;
    border-collapse: separate;
    border-spacing: 0;
    table-layout: fixed;
}
th, td {
    height: 25px;
    padding: 0 0 2px 8px;
    border-bottom: 1px solid #ddd;
    font-weight: normal;
    text-align: left;
    white-space: nowrap;
}
td {
    padding-left: 3px;
    border-left: 1px solid #ddd;
}
.group th {
    position: relative;
    padding: 2px 0 0 2px;
    background: #d8d8d8;
}
.group svg {
    position: absolute;
    right: 2px;
    top: 1px;
    width: 6px;
    height: 8px;
    fill: none;
    stroke: #444;
}
.off {
    color: #777;
}
td.edit {
    border: 1px solid #777;
    padding-bottom: 0;
}
td input {
    display: block;
    width: 100%;
}
input[type="checkbox"] {
    appearance: none;
    width: 16px;
    height: 16px;
    border: 1px solid #333;
    background: #fff;
}
input[type="checkbox"]:checked::after {
    content: "";
    display: block;
    width: 10px;
    height: 5px;
    margin: 3px 2px;
    border: solid #333;
    border-width: 0 0 1px 1px;
    transform: rotate(-45deg);
}
.apply {
    margin-top: auto;
    height: 29px;
    display: flex;
    align-items: flex-start;
    justify-content: space-between;
    background: #ececec;
}
.apply a {
    margin: 2px 0 0 2px;
    color: #2b6fc7;
    font-size: 13px;
    text-decoration: underline;
}
.apply button {
    width: 98px;
    height: 26px;
    margin-right: 1px;
    background: #c6c6c6;
    color: #888;
}

/* status bar */
.status {
    height: 34px;
    display: flex;
    align-items: center;
    justify-content: space-between;
    padding: 2px 35px 0 2px;
    background: #c8c8c8;
}
.filters {
    display: flex;
    align-items: center;
}
.filters button {
    width: 27px;
}
.filters svg {
    display: block;
    width: 22px;
    height: 22px;
    margin: auto;
}
.banner {
    position: absolute;
    top: 0;
    right: 0;
    width: 593px;
    height: 58px;
    padding-bottom: 4px;
    display: flex;
    align-items: center;
    justify-content: center;
    background: rgba(55, 67, 143, .91);
    color: #fff;
    font: 700 30px "Noto Sans CJK JP", sans-serif;
    font-feature-settings: normal;
}
```
